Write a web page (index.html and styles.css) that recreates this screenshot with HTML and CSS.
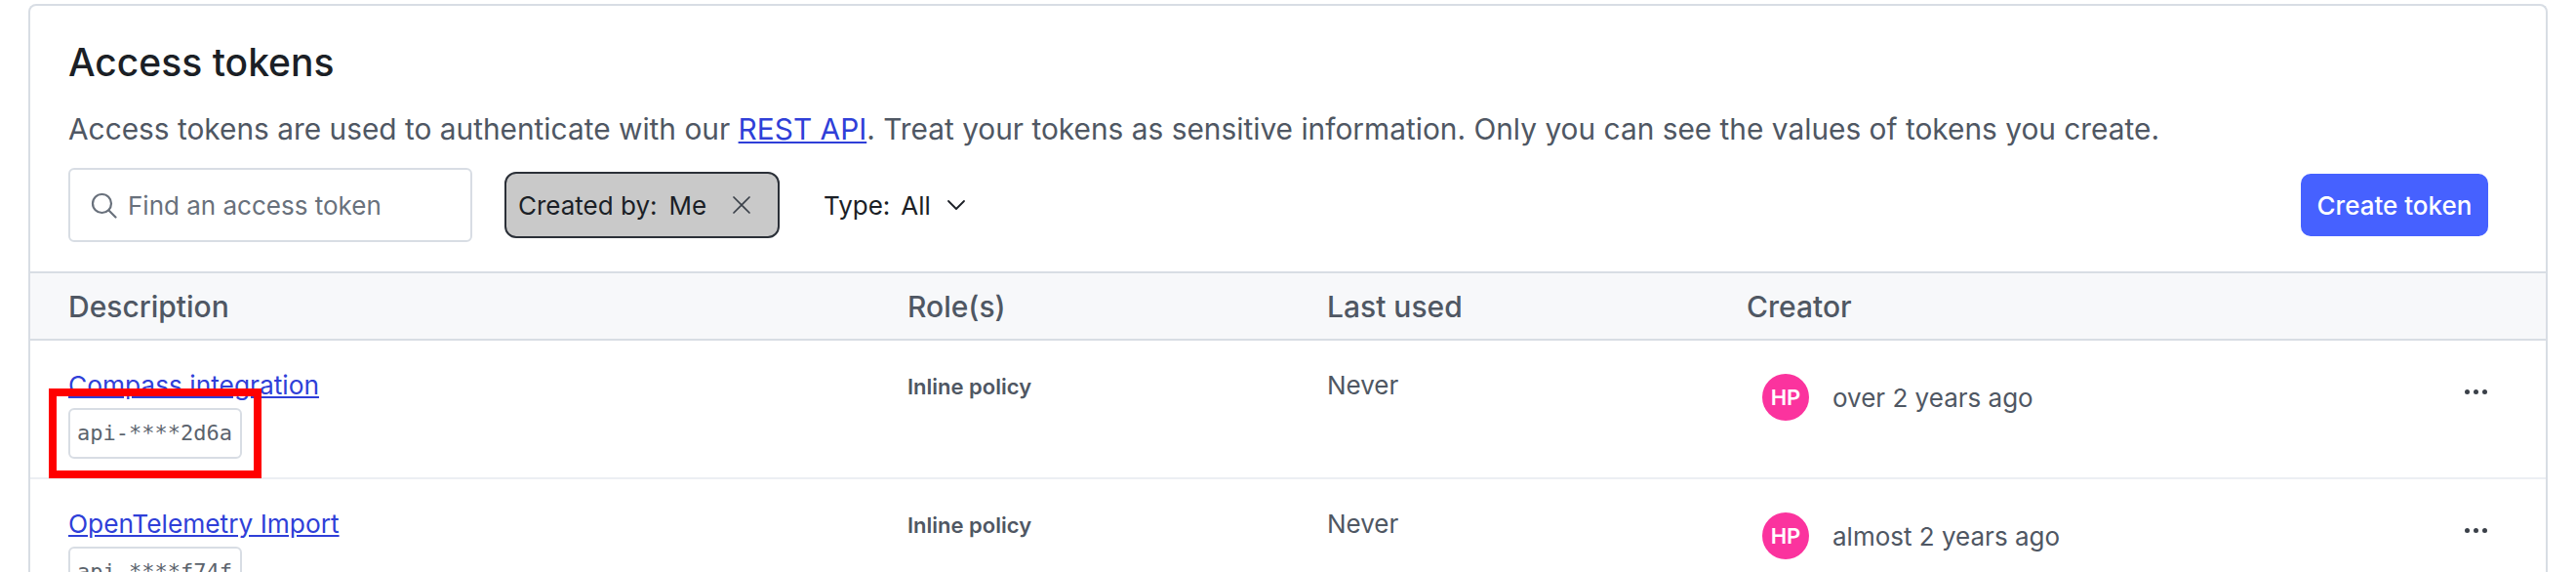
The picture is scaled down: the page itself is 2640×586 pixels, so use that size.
FILE: index.html
```html
<!DOCTYPE html>
<html lang="en">
<head>
  <meta charset="UTF-8">
  <meta name="viewport" content="width=device-width, initial-scale=1.0">
  <title>Access tokens</title>
  <link rel="stylesheet" href="styles.css">
</head>
<body>
  <section class="card">
    <div class="card-head">
      <h1>Access tokens</h1>
      <p class="intro">Access tokens are used to authenticate with our <a href="#">REST API</a>. Treat your tokens as sensitive information. Only you can see the values of tokens you create.</p>
      <div class="toolbar">
        <label class="search">
          <svg class="search-icon" width="28" height="28" viewBox="0 0 28 28" fill="none" stroke="currentColor" stroke-width="2.2" stroke-linecap="round"><circle cx="12.5" cy="12.5" r="9.5"/><path d="M19.5 19.5l7 7"/></svg>
          <input type="text" placeholder="Find an access token">
        </label>
        <button class="chip-filter">
          <span>Created by:</span><span>Me</span>
          <svg class="chip-x" width="20" height="20" viewBox="0 0 20 20" fill="none" stroke="currentColor" stroke-width="1.7" stroke-linecap="round"><path d="M2 2l16 16M18 2L2 18"/></svg>
        </button>
        <button class="type-filter">
          <span>Type:</span><span>All</span>
          <svg width="20" height="12" viewBox="0 0 20 12" fill="none" stroke="currentColor" stroke-width="1.8" stroke-linecap="round" stroke-linejoin="round"><path d="M2 2l8 8 8-8"/></svg>
        </button>
        <button class="create-btn">Create token</button>
      </div>
    </div>

    <table class="tokens">
      <thead>
        <tr>
          <th class="col-desc">Description</th>
          <th class="col-role">Role(s)</th>
          <th class="col-used">Last used</th>
          <th>Creator</th>
          <th class="col-actions"></th>
        </tr>
      </thead>
      <tbody>
        <tr>
          <td>
            <a class="token-name" href="#">Compass integration</a>
            <code class="token-key">api-****2d6a</code>
          </td>
          <td class="role">Inline policy</td>
          <td class="used">Never</td>
          <td>
            <div class="creator"><span class="avatar">HP</span><span>over 2 years ago</span></div>
          </td>
          <td class="actions"><span class="dots"><i></i><i></i><i></i></span></td>
        </tr>
        <tr>
          <td>
            <a class="token-name" href="#">OpenTelemetry Import</a>
            <code class="token-key">api-****f74f</code>
          </td>
          <td class="role">Inline policy</td>
          <td class="used">Never</td>
          <td>
            <div class="creator"><span class="avatar">HP</span><span>almost 2 years ago</span></div>
          </td>
          <td class="actions"><span class="dots"><i></i><i></i><i></i></span></td>
        </tr>
      </tbody>
    </table>
  </section>

  <div class="highlight"></div>
</body>
</html>
```

FILE: styles.css
```css
html, body {
  height: 586px;
  overflow: hidden;
}
body {
  font-family: 'Inter', 'Liberation Sans', sans-serif;
  background: #fff;
  color: #1b1f26;
  margin: 0;
  padding: 4px 29px 0;
  box-sizing: border-box;
  position: relative;
}
.card {
  border: 2px solid #d8dde4;
  border-bottom: none;
  border-radius: 8px 8px 0 0;
  background: #fff;
}
.card-head {
  padding: 36px 61px 30px 39px;
}
h1 {
  font-size: 39px;
  line-height: 44px;
  font-weight: 500;
  margin: 0;
}
.intro {
  font-size: 29.85px;
  line-height: 40px;
  color: #4f5763;
  margin: 26px 0 0;
}
.intro a, .token-name {
  color: #2f3fd8;
  text-decoration: underline;
}
.toolbar {
  display: flex;
  align-items: center;
  margin-top: 20px;
  width: 2480px;
}
.search {
  display: flex;
  align-items: center;
  box-sizing: border-box;
  width: 414px;
  height: 76px;
  padding: 0 20px;
  border: 2px solid #d8dde4;
  border-radius: 6px;
  color: #69717c;
}
.search input {
  border: none;
  outline: none;
  padding: 0;
  margin-left: 11px;
  width: 320px;
  font: 400 26px 'Inter', sans-serif;
  color: #1b1f26;
}
.search input::placeholder {
  color: #69717c;
  opacity: 1;
}
button {
  font-family: inherit;
  font-size: 26px;
  cursor: pointer;
}
.chip-filter {
  display: flex;
  align-items: center;
  box-sizing: border-box;
  height: 68px;
  width: 282px;
  margin-left: 33px;
  padding: 0 12px;
  background: #c9c9c9;
  border: 2px solid #2b3038;
  border-radius: 12px;
  color: #1b1f26;
}
.chip-filter span + span {
  margin-left: 12px;
}
.chip-x {
  margin-left: 26px;
  color: #3a4049;
}
.type-filter {
  display: flex;
  align-items: center;
  margin-left: 45px;
  padding: 0;
  background: none;
  border: none;
  color: #1b1f26;
}
.type-filter span + span {
  margin-left: 11px;
}
.type-filter svg {
  margin-left: 16px;
}
.create-btn {
  margin-left: auto;
  height: 64px;
  width: 192px;
  padding: 0;
  background: #4661ff;
  color: #fff;
  border: none;
  border-radius: 10px;
  font-weight: 500;
}
.tokens {
  width: 100%;
  border-collapse: collapse;
  table-layout: fixed;
}
.tokens th {
  height: 67px;
  padding: 0;
  text-align: left;
  font-size: 30px;
  font-weight: 550;
  color: #4f5763;
  background: #f7f8fa;
  border-top: 2px solid #d8dde4;
  border-bottom: 2px solid #d8dde4;
}
.col-desc { width: 860px; }
.col-role, .col-used { width: 430px; }
.col-actions { width: 83px; }
th.col-desc, .tokens td:first-child {
  padding-left: 39px;
}
.tokens td {
  height: 142px;
  padding: 26px 0 0;
  box-sizing: border-box;
  vertical-align: top;
  font-size: 26px;
  color: #4f5763;
  border-bottom: 2px solid #eceff3;
}
.token-name {
  display: block;
  width: max-content;
  font-size: 26.3px;
  line-height: 40px;
}
.token-key {
  display: block;
  box-sizing: border-box;
  width: 178px;
  height: 52px;
  margin-top: 3px;
  padding: 0 7px;
  border: 2px solid #d8dde4;
  border-radius: 6px;
  font: 22px/48px 'DejaVu Sans Mono', monospace;
  white-space: nowrap;
  color: #5b636d;
}
.tokens .role {
  padding-top: 27px;
  font-size: 22px;
  line-height: 40px;
  font-weight: 600;
}
.tokens .used {
  font-size: 26px;
  line-height: 40px;
}
.creator {
  display: flex;
  align-items: center;
  margin: 8px 0 0 16px;
  font-size: 26px;
}
.avatar {
  width: 48px;
  height: 48px;
  margin-right: 24px;
  border-radius: 50%;
  background: #fb339e;
  color: #fff;
  font-size: 22px;
  font-weight: 600;
  line-height: 48px;
  text-align: center;
}
.tokens .actions {
  padding-top: 50px;
}
.dots {
  display: flex;
  gap: 4px;
  width: 24px;
}
.dots i {
  width: 5px;
  height: 5px;
  border-radius: 50%;
  background: #3a4049;
}
.highlight {
  position: absolute;
  left: 50px;
  top: 398px;
  width: 202px;
  height: 76px;
  border: 8px solid #ff0000;
}
```
